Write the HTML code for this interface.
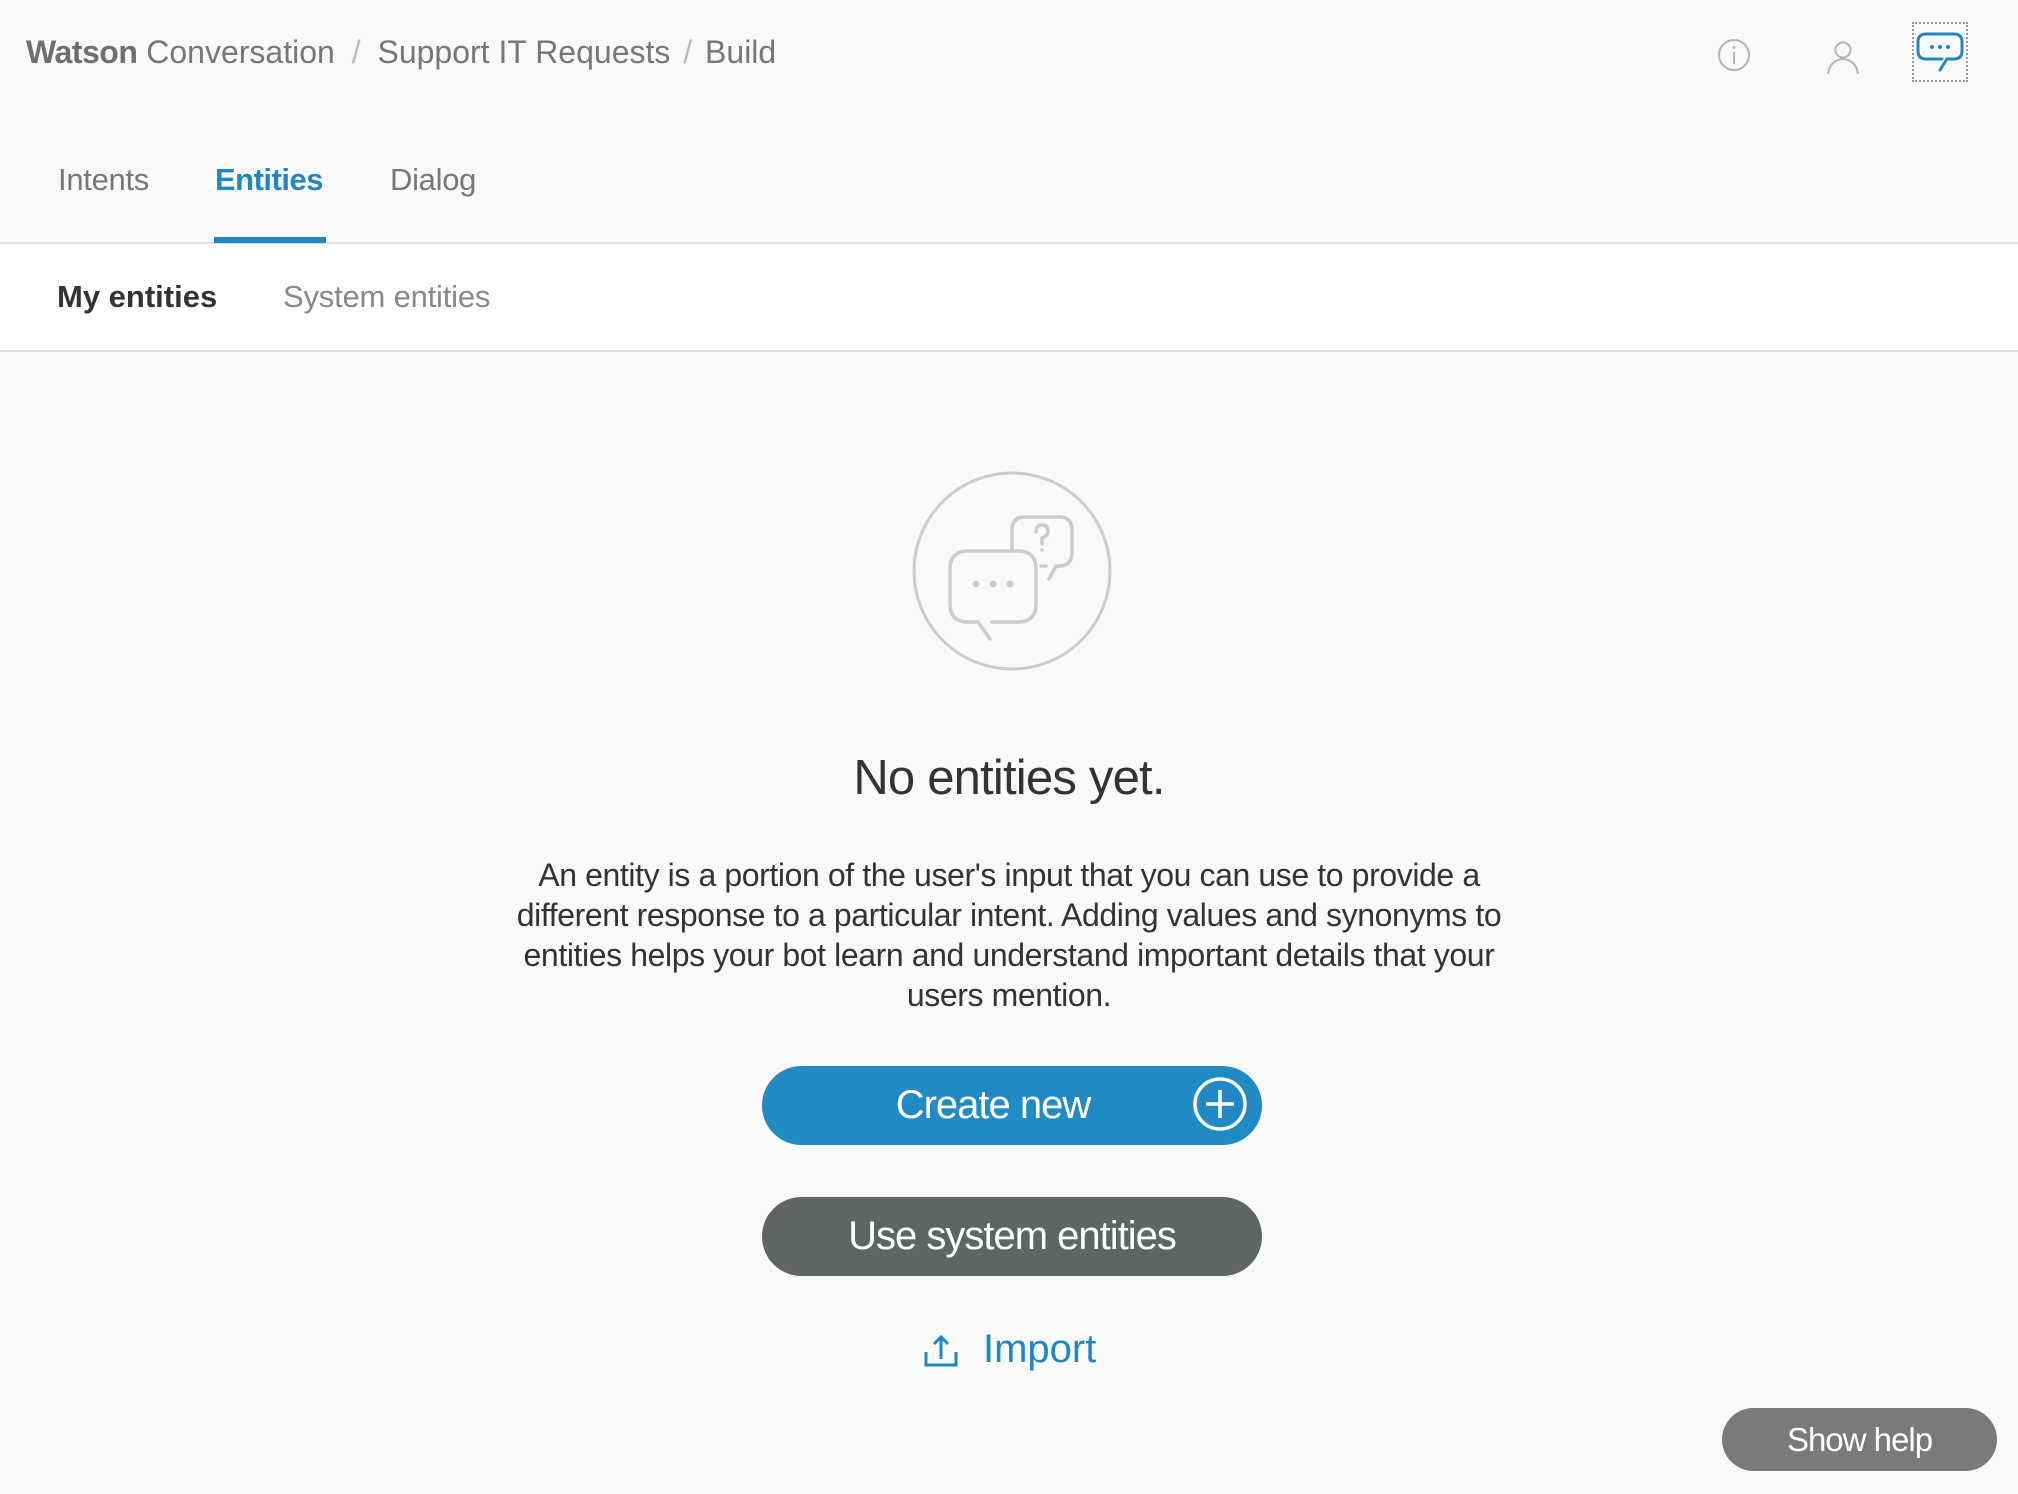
<!DOCTYPE html>
<html><head><meta charset="utf-8"><style>
*{margin:0;padding:0;box-sizing:border-box}
body{width:2018px;height:1494px;background:#f9f9f9;font-family:"Liberation Sans",Arial,sans-serif;position:relative;overflow:hidden}
.a{position:absolute;white-space:nowrap}
</style></head><body>
<div class="a" style="left:26px;top:34px;font-size:32px;color:#777;letter-spacing:0px"><b style="color:#6f6f6f;letter-spacing:-0.5px">Watson</b> Conversation <span style="color:#bbb;margin:0 8px">/</span> Support IT Requests <span style="color:#bbb;margin:0 4px">/</span> Build</div>
<svg class="a" style="left:1714px;top:35px" width="40" height="40" viewBox="0 0 40 40"><circle cx="20" cy="20" r="15" fill="none" stroke="#b5b5b5" stroke-width="2"/><line x1="20" y1="17" x2="20" y2="29" stroke="#b5b5b5" stroke-width="2"/><circle cx="20" cy="12.5" r="1.4" fill="#b5b5b5"/></svg>
<svg class="a" style="left:1823px;top:38px" width="40" height="40" viewBox="0 0 40 40"><circle cx="20" cy="12" r="7.5" fill="none" stroke="#b5b5b5" stroke-width="2"/><path d="M5 36 Q7 22 20 21 Q33 22 35 36" fill="none" stroke="#b5b5b5" stroke-width="2"/></svg>
<div class="a" style="left:1912px;top:22px;width:56px;height:60px;border:2px dotted #999"></div>
<svg class="a" style="left:1914px;top:28px" width="54" height="50" viewBox="0 0 54 50"><g fill="none" stroke="#2187c4" stroke-width="3" stroke-linejoin="round" stroke-linecap="round"><path d="M28 31 H12 Q4 31 4 23 V14 Q4 6 12 6 H40 Q48 6 48 14 V23 Q48 31 40 31 H33"/><path d="M33 31 L26 42"/></g><circle cx="18" cy="19" r="2" fill="#2187c4"/><circle cx="26" cy="19" r="2" fill="#2187c4"/><circle cx="34" cy="19" r="2" fill="#2187c4"/></svg>
<div class="a" style="left:58px;top:162px;font-size:31px;color:#777;letter-spacing:-0.3px">Intents</div>
<div class="a" style="left:215px;top:162px;font-size:31px;color:#2187c4;font-weight:bold;letter-spacing:-0.5px">Entities</div>
<div class="a" style="left:390px;top:162px;font-size:31px;color:#777;letter-spacing:-0.3px">Dialog</div>
<div class="a" style="left:0;top:242px;width:2018px;height:110px;background:#fff;border-top:2px solid #ddd;border-bottom:2px solid #ddd"></div>
<div class="a" style="left:214px;top:237px;width:112px;height:6px;background:#2187c4"></div>
<div class="a" style="left:57px;top:279px;font-size:31px;color:#333;font-weight:bold;letter-spacing:0px">My entities</div>
<div class="a" style="left:283px;top:279px;font-size:31px;color:#888;letter-spacing:-0.2px">System entities</div>
<svg class="a" style="left:910px;top:470px" width="204" height="204" viewBox="0 0 204 204"><circle cx="102" cy="101" r="98" fill="none" stroke="#ccc" stroke-width="3"/>
<g fill="none" stroke="#ccc" stroke-width="3.5" stroke-linecap="round" stroke-linejoin="round">
<path d="M102 80 V60 Q102 47 115 47 H149 Q162 47 162 60 V82 Q162 96 149 96 H146 L139 109"/>
<line x1="131" y1="96" x2="136" y2="96"/>
<path d="M82 152 L94 152 M68 152 H58 Q40 152 40 134 V99 Q40 81 58 81 H108 Q126 81 126 99 V134 Q126 152 108 152 H84"/>
<path d="M68 152 L80 169"/>
<path d="M126 62 Q126 55 132 55 Q138 55 138 61 Q138 66 132 68 V74"/>
</g><circle cx="132" cy="80" r="1.8" fill="#ccc"/>
<circle cx="66" cy="114" r="3.5" fill="#ccc"/><circle cx="83" cy="114" r="3.5" fill="#ccc"/><circle cx="100" cy="114" r="3.5" fill="#ccc"/></svg>
<div class="a" style="left:0;width:2018px;text-align:center;top:750px;font-size:49px;color:#333;letter-spacing:-0.8px">No entities yet.</div>
<div class="a" style="left:0;width:2018px;text-align:center;top:855px;font-size:32px;line-height:40px;color:#333;letter-spacing:-0.4px">An entity is a portion of the user's input that you can use to provide a<br>different response to a particular intent. Adding values and synonyms to<br>entities helps your bot learn and understand important details that your<br>users mention.</div>
<div class="a" style="left:762px;top:1066px;width:500px;height:79px;border-radius:40px;background:#2189c4"></div>
<div class="a" style="left:762px;width:462px;text-align:center;top:1083px;font-size:40px;color:#fff;letter-spacing:-1px">Create new</div>
<svg class="a" style="left:1192px;top:1076px" width="56" height="56" viewBox="0 0 56 56"><circle cx="28" cy="28" r="25" fill="none" stroke="#fff" stroke-width="3.5"/><path d="M28 14 V42 M14 28 H42" stroke="#fff" stroke-width="3.5"/></svg>
<div class="a" style="left:762px;top:1197px;width:500px;height:79px;border-radius:40px;background:#5f6465"></div>
<div class="a" style="left:762px;width:500px;text-align:center;top:1214px;font-size:40px;color:#fff;letter-spacing:-1px">Use system entities</div>
<svg class="a" style="left:923px;top:1332px" width="36" height="36" viewBox="0 0 36 36"><path d="M3 20 V33 H33 V20" fill="none" stroke="#2187c4" stroke-width="3"/><path d="M18 27 V5 M11 12 L18 5 L25 12" fill="none" stroke="#2187c4" stroke-width="3"/></svg>
<div class="a" style="left:983px;top:1327px;font-size:40px;color:#2187c4;letter-spacing:0px">Import</div>
<div class="a" style="left:1722px;top:1408px;width:275px;height:63px;border-radius:32px;background:#7a7a7a;color:#fff;font-size:33px;text-align:center;line-height:63px;letter-spacing:-1px">Show help</div>
</body></html>
